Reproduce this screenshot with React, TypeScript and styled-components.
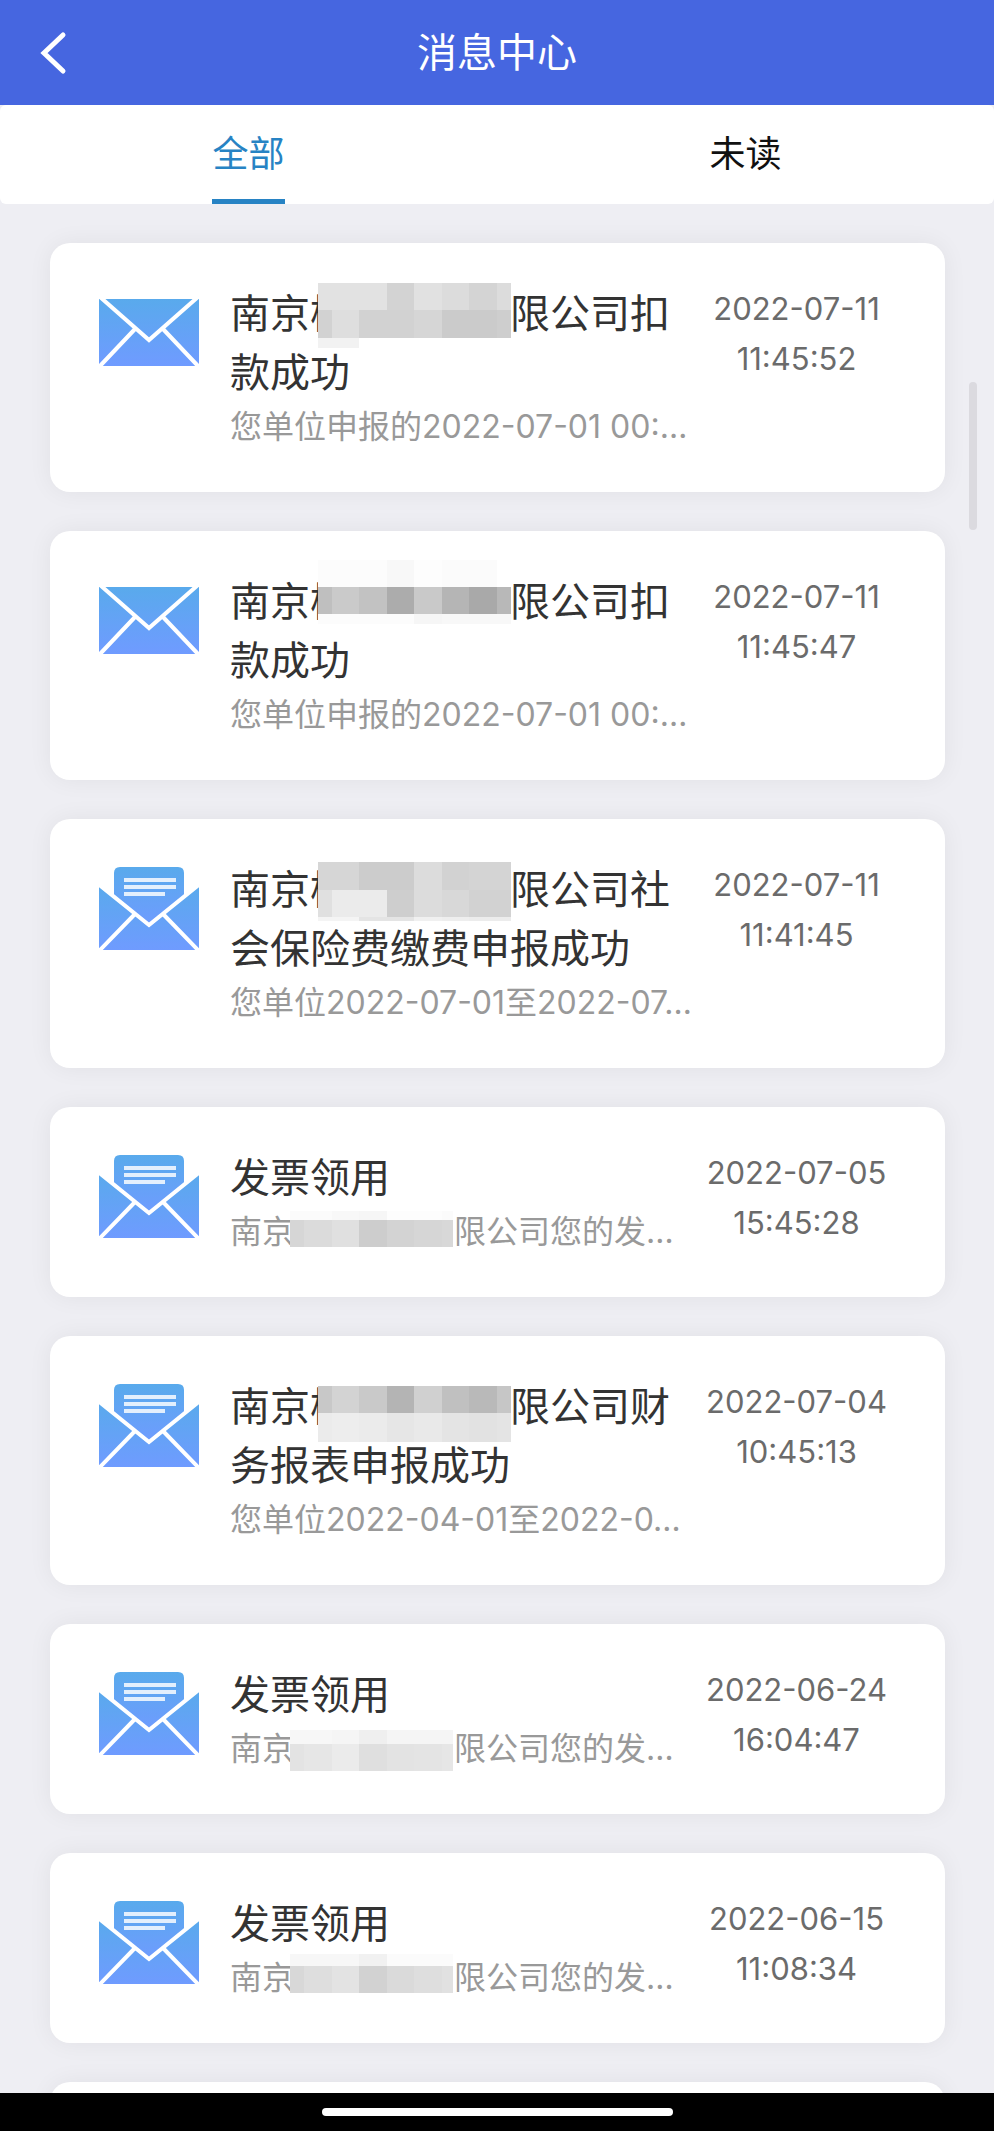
import React, { useState } from "react";
import styled, { createGlobalStyle } from "styled-components";

const GlobalStyle = createGlobalStyle`
  * { box-sizing: border-box; }
  body {
    margin: 0;
    background: #eeeef3;
    font-family: Inter, "Noto Sans CJK SC", sans-serif;
  }
`;

const Screen = styled.div`
  position: relative;
  display: flex;
  flex-direction: column;
  height: 100vh;
  overflow: hidden;
  background: #eeeef3;
`;

const Header = styled.header`
  display: grid;
  grid-template-columns: 106px 1fr 106px;
  align-items: center;
  flex: none;
  height: 105px;
  background: #4666e0;
`;

const BackButton = styled.button`
  display: flex;
  align-items: center;
  height: 100%;
  padding: 0 0 0 39px;
  border: 0;
  background: none;
  color: #fff;
  cursor: pointer;
`;

const PageTitle = styled.h1`
  margin: 0;
  font-size: 40px;
  line-height: 60px;
  font-weight: 400;
  text-align: center;
  color: #fff;
`;

const Tabs = styled.div`
  display: flex;
  flex: none;
  height: 99px;
  border-radius: 6px;
  background: #fff;
`;

const TabSlot = styled.div`
  display: flex;
  flex: 1;
  justify-content: center;
`;

const Tab = styled.button<{ $active: boolean }>`
  padding: 4px 0 0;
  border: 0;
  border-bottom: 5px solid ${(p) => (p.$active ? "#2783c4" : "transparent")};
  background: none;
  font-family: inherit;
  font-size: 36px;
  line-height: 54px;
  color: ${(p) => (p.$active ? "#2783c4" : "#111")};
  cursor: pointer;
`;

const List = styled.main`
  display: flex;
  flex: 1;
  flex-direction: column;
  gap: 39px;
  min-height: 0;
  padding: 39px 49px 39px 50px;
  overflow-y: auto;
  scrollbar-width: none;
`;

const Card = styled.article`
  display: flex;
  flex: none;
  align-items: flex-start;
  min-height: 190px;
  padding: 41px 49px 40px;
  border-radius: 20px;
  background: #fff;
  box-shadow: 0 0 24px rgba(0, 0, 0, 0.06);
`;

const IconBox = styled.svg`
  flex: none;
  width: 100px;
  height: 92px;
  margin-right: 31px;
`;

const Body = styled.div`
  flex: 1;
  min-width: 0;
`;

const Title = styled.h2`
  margin: 0;
  font-size: 40px;
  line-height: 59px;
  font-weight: 400;
  color: #333;
`;

const Summary = styled.p`
  margin: 0;
  font-size: 32px;
  line-height: 50px;
  white-space: nowrap;
  color: #999;
`;

const Stamp = styled.time`
  flex: none;
  width: 199px;
  font-size: 31px;
  line-height: 50px;
  text-align: center;
  color: #6b6b6b;
`;

const StampLine = styled.span`
  display: block;
`;

const Redacted = styled.span<{ $wide: boolean }>`
  position: relative;
  display: inline-block;
  width: 160px;
  height: ${(p) => (p.$wide ? 59 : 50)}px;
  vertical-align: top;
`;

const MosaicSvg = styled.svg<{ $wide: boolean }>`
  position: absolute;
  top: 0;
  left: ${(p) => (p.$wide ? -32 : -4)}px;
  width: ${(p) => (p.$wide ? 193 : 163)}px;
  height: 100%;
  overflow: visible;
`;

const ScrollThumb = styled.div`
  position: absolute;
  top: 382px;
  right: 17px;
  width: 8px;
  height: 148px;
  border-radius: 4px;
  background: #dbdadf;
`;

const HomeBar = styled.footer`
  display: flex;
  flex: none;
  justify-content: center;
  align-items: center;
  height: 38px;
  background: #000;
`;

const HomeIndicator = styled.div`
  width: 351px;
  height: 8px;
  border-radius: 4px;
  background: #fff;
`;

/* One band of mosaic blocks: y and height are measured from the text line's top,
   shades holds one grey per block and null where nothing is covered. */
type Band = { y: number; h: number; shades: (string | null)[] };

const WIDE_BLOCKS = [14, 27, 28, 27, 28, 27, 28, 14];
const NARROW_BLOCKS = [14, 28, 27, 28, 27, 28, 11];

function Mosaic({ bands, wide }: { bands: Band[]; wide: boolean }) {
  const blocks = wide ? WIDE_BLOCKS : NARROW_BLOCKS;
  return (
    <Redacted $wide={wide}>
      <MosaicSvg $wide={wide} aria-hidden="true" shapeRendering="crispEdges">
        {bands.map((band) => {
          let x = 0;
          return band.shades.map((shade, i) => {
            const left = x;
            x += blocks[i];
            return shade ? (
              <rect key={`${band.y}-${i}`} x={left} y={band.y} width={blocks[i]} height={band.h} fill={shade} />
            ) : null;
          });
        })}
      </MosaicSvg>
    </Redacted>
  );
}

const TOP = "#59aaec";
const BOTTOM = "#6f9bff";

function Envelope({ open }: { open: boolean }) {
  const id = open ? "mail-open" : "mail-closed";
  return (
    <IconBox viewBox="0 0 100 92" role="img" aria-label={open ? "已读" : "未读"}>
      <defs>
        <linearGradient id={id} gradientUnits="userSpaceOnUse" x1="0" y1={open ? 25 : 15} x2="0" y2={open ? 90 : 81}>
          <stop offset="0" stopColor={TOP} />
          <stop offset="1" stopColor={BOTTOM} />
        </linearGradient>
        <linearGradient id="mail-letter" gradientUnits="userSpaceOnUse" x1="0" y1="7" x2="0" y2="66">
          <stop offset="0" stopColor={TOP} />
          <stop offset="1" stopColor={BOTTOM} />
        </linearGradient>
      </defs>
      {open ? (
        <>
          <path d="M0 25 L50 67 L100 25 V90 H0 Z" fill={`url(#${id})`} />
          <path d="M15 37 V13 Q15 7 21 7 H79 Q85 7 85 13 V37 L50 65 Z" fill="url(#mail-letter)" />
          <path d="M-2 23 L50 65 L102 23 M36 54 L0 91 M64 54 L100 91" fill="none" stroke="#fff" strokeWidth="4" />
          <path d="M25 20 H77 M25 27 H77 M25 34 H66" fill="none" stroke="#e3effd" strokeWidth="4" />
        </>
      ) : (
        <>
          <rect x="0" y="15" width="100" height="67" fill={`url(#${id})`} />
          <path d="M0 12 L50 56 L100 12 M36 45 L0 83 M64 45 L100 83" fill="none" stroke="#fff" strokeWidth="4" />
        </>
      )}
    </IconBox>
  );
}

type Message = {
  open: boolean;
  title: string;
  titleRest?: string;
  summary: string;
  summaryRest?: string;
  date: string;
  time: string;
  bands: Band[];
};

const messages: Message[] = [
  {
    open: false,
    title: "南京杨",
    titleRest: "限公司扣款成功",
    summary: "您单位申报的2022-07-01 00:…",
    date: "2022-07-11",
    time: "11:45:52",
    bands: [
      { y: -1, h: 27, shades: ["#e2e2e2", "#e2e2e2", "#e2e2e2", "#d3d3d3", "#e1e1e1", "#dcdcdc", "#d4d4d4", "#dcdcdc"] },
      { y: 26, h: 28, shades: ["#d2d2d2", "#dedede", "#d2d2d2", "#d2d2d2", "#d6d6d6", "#cbcbcb", "#cbcbcb", "#cecece"] },
      { y: 54, h: 10, shades: ["#f2f2f2", "#f2f2f2", null, null, null, null, null, null] },
    ],
  },
  {
    open: false,
    title: "南京杨",
    titleRest: "限公司扣款成功",
    summary: "您单位申报的2022-07-01 00:…",
    date: "2022-07-11",
    time: "11:45:47",
    bands: [
      { y: -12, h: 27, shades: ["#fcfcfc", "#fcfcfc", "#fcfcfc", "#f8f8f8", "#fdfdfd", "#fbfbfb", "#fbfbfb", null] },
      { y: 15, h: 27, shades: ["#bfbfbf", "#cacaca", "#c2c2c2", "#acacac", "#c9c9c9", "#b5b5b5", "#a9a9a9", "#b8b8b8"] },
      { y: 42, h: 10, shades: ["#fcfcfc", "#fcfcfc", "#fcfcfc", "#fcfcfc", "#f6f6f6", "#f8f8f8", "#f8f8f8", "#f8f8f8"] },
    ],
  },
  {
    open: true,
    title: "南京杨",
    titleRest: "限公司社会保险费缴费申报成功",
    summary: "您单位2022-07-01至2022-07…",
    date: "2022-07-11",
    time: "11:41:45",
    bands: [
      { y: 2, h: 28, shades: ["#d6d6d6", "#d6d6d6", "#cccccc", "#cccccc", "#dcdcdc", "#d2d2d2", "#d4d4d4", "#d4d4d4"] },
      { y: 30, h: 27, shades: ["#e0e0e0", "#ebebeb", "#ebebeb", "#cecece", "#dcdcdc", "#d8d8d8", "#d2d2d2", "#d2d2d2"] },
      { y: 57, h: 4, shades: ["#f4f4f4", "#f4f4f4", "#e4e4e4", "#e4e4e4", "#f0f0f0", "#eeeeee", "#ececec", "#ececec"] },
    ],
  },
  {
    open: true,
    title: "发票领用",
    summary: "南京",
    summaryRest: "限公司您的发…",
    date: "2022-07-05",
    time: "15:45:28",
    bands: [
      { y: 4, h: 9, shades: ["#fbfbfb", "#fbfbfb", "#f8f8f8", "#f6f6f6", "#fdfdfd", "#fdfdfd", "#fbfbfb"] },
      { y: 13, h: 27, shades: ["#d6d6d6", "#dbdbdb", "#e0e0e0", "#cdcdcd", "#d3d3d3", "#d6d6d6", "#d8d8d8"] },
    ],
  },
  {
    open: true,
    title: "南京杨",
    titleRest: "限公司财务报表申报成功",
    summary: "您单位2022-04-01至2022-0…",
    date: "2022-07-04",
    time: "10:45:13",
    bands: [
      { y: 9, h: 27, shades: ["#c8c8c8", "#d3d3d3", "#c9c9c9", "#b4b4b4", "#d0d0d0", "#c0c0c0", "#b9b9b9", "#c6c6c6"] },
      { y: 36, h: 29, shades: ["#ebebeb", "#ededed", "#ebebeb", "#e6e6e6", "#e9e9e9", "#e4e4e4", "#e2e2e2", "#e4e4e4"] },
    ],
  },
  {
    open: true,
    title: "发票领用",
    summary: "南京",
    summaryRest: "限公司您的发…",
    date: "2022-06-24",
    time: "16:04:47",
    bands: [
      { y: 6, h: 14, shades: ["#f7f7f7", "#f7f7f7", "#f5f5f5", "#efefef", "#f5f5f5", "#f5f5f5", "#f5f5f5"] },
      { y: 20, h: 27, shades: ["#e3e3e3", "#e6e6e6", "#ebebeb", "#dfdfdf", "#e3e3e3", "#e4e4e4", "#e6e6e6"] },
    ],
  },
  {
    open: true,
    title: "发票领用",
    summary: "南京",
    summaryRest: "限公司您的发…",
    date: "2022-06-15",
    time: "11:08:34",
    bands: [
      { y: 1, h: 12, shades: ["#f7f7f7", "#f7f7f7", "#f7f7f7", "#f1f1f1", "#fbfbfb", "#fbfbfb", "#fbfbfb"] },
      { y: 13, h: 27, shades: ["#d8d8d8", "#dedede", "#e3e3e3", "#d2d2d2", "#dadada", "#dedede", "#e1e1e1"] },
    ],
  },
];

function MessageCard({ message }: { message: Message }) {
  return (
    <Card>
      <Envelope open={message.open} />
      <Body>
        <Title>
          {message.title}
          {message.titleRest && <Mosaic bands={message.bands} wide />}
          {message.titleRest}
        </Title>
        <Summary>
          {message.summary}
          {message.summaryRest && <Mosaic bands={message.bands} wide={false} />}
          {message.summaryRest}
        </Summary>
      </Body>
      <Stamp dateTime={`${message.date}T${message.time}`}>
        <StampLine>{message.date}</StampLine>
        <StampLine>{message.time}</StampLine>
      </Stamp>
    </Card>
  );
}

export default function App() {
  const [tab, setTab] = useState("全部");
  return (
    <>
      <GlobalStyle />
      <Screen>
        <Header>
          <BackButton type="button" aria-label="返回">
            <svg width="28" height="44" viewBox="0 0 28 44" fill="none" stroke="currentColor" strokeWidth="5">
              <path d="M24 4 L5 22 L24 40" strokeLinecap="round" />
            </svg>
          </BackButton>
          <PageTitle>消息中心</PageTitle>
        </Header>
        <Tabs role="tablist">
          {["全部", "未读"].map((name) => (
            <TabSlot key={name}>
              <Tab type="button" role="tab" aria-selected={tab === name} $active={tab === name} onClick={() => setTab(name)}>
                {name}
              </Tab>
            </TabSlot>
          ))}
        </Tabs>
        <List>
          {messages.map((message) => (
            <MessageCard key={message.date + message.time} message={message} />
          ))}
          <Card aria-hidden="true" />
        </List>
        <ScrollThumb />
        <HomeBar>
          <HomeIndicator />
        </HomeBar>
      </Screen>
    </>
  );
}
